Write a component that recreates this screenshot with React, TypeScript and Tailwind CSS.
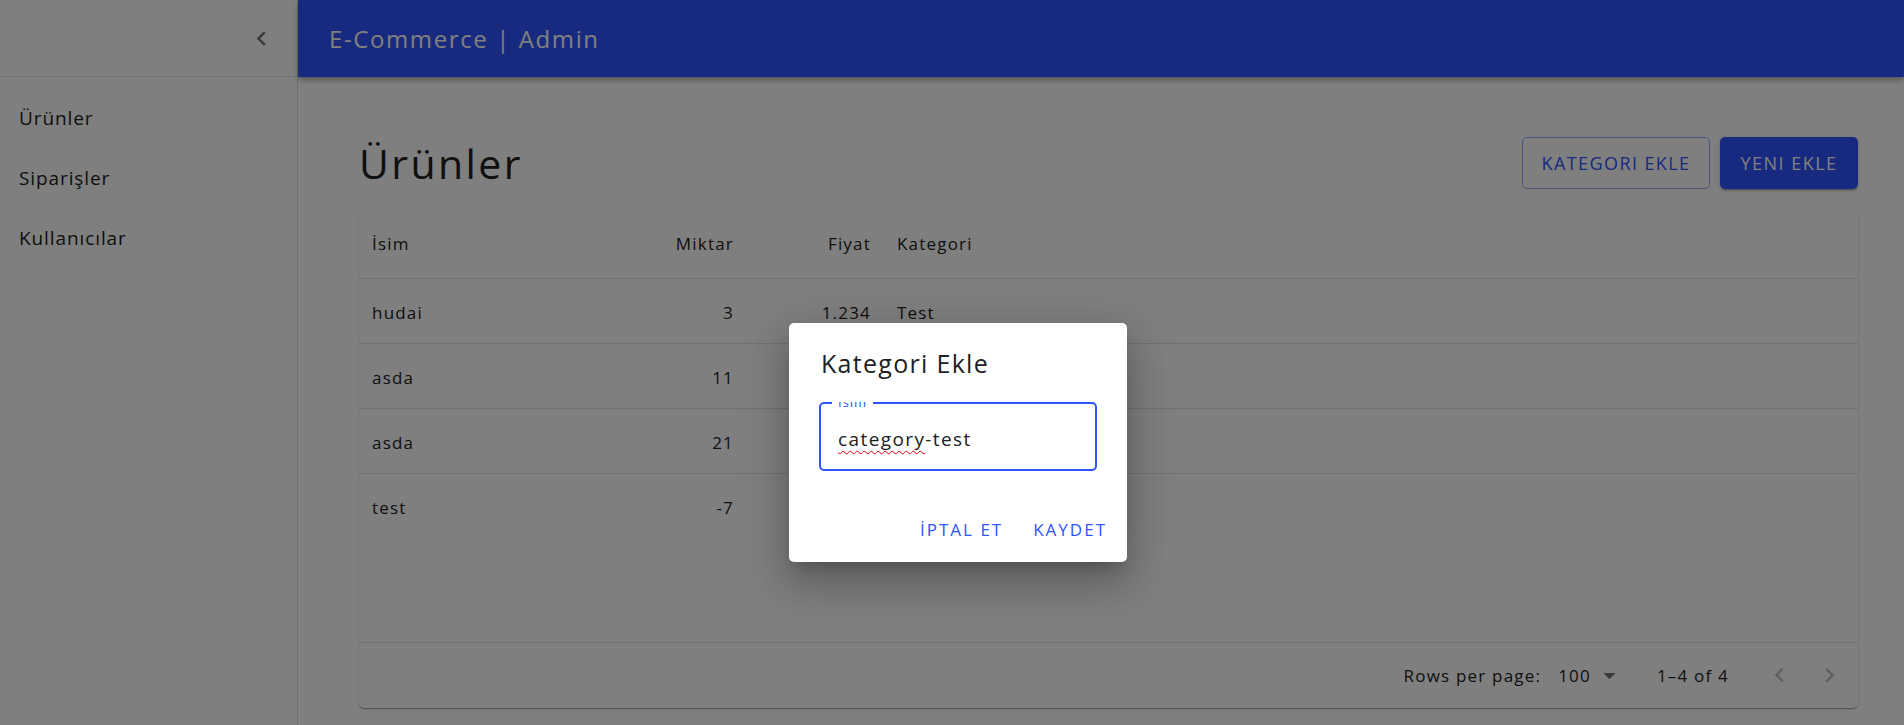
import React from "react";

const FONT = { fontFamily: '"Open Sans", "Noto Sans", sans-serif' };

const ROWS = [
  { name: "hudai", qty: "3", price: "1.234", cat: "Test" },
  { name: "asda", qty: "11", price: "", cat: "" },
  { name: "asda", qty: "21", price: "", cat: "" },
  { name: "test", qty: "-7", price: "", cat: "" },
];

function Icon({ d, className }: { d: string; className?: string }) {
  return (
    <svg viewBox="0 0 24 24" className={className} fill="currentColor">
      <path d={d} />
    </svg>
  );
}

function Sidebar() {
  return (
    <aside className="flex w-[298px] shrink-0 flex-col border-r border-[#e0e0e0] bg-white">
      <div className="flex h-[77px] items-center justify-end border-b border-[#e0e0e0] pr-[21px]">
        <Icon d="M15.41 7.41 14 6l-6 6 6 6 1.41-1.41L10.83 12z" className="h-[29px] w-[29px] text-black/55" />
      </div>
      <nav className="flex flex-col pt-[11px]">
        {["Ürünler", "Siparişler", "Kullanıcılar"].map((t) => (
          <div key={t} className="flex h-[60px] items-center px-[19px] text-[19px] tracking-[0.9px] text-[#212121]">
            {t}
          </div>
        ))}
      </nav>
    </aside>
  );
}

function ProductsTable() {
  return (
    <div className="flex h-[498px] flex-col rounded-[5px] bg-white text-[17px] tracking-[1.2px] text-[#212121] shadow-[0_2px_1px_-1px_rgba(0,0,0,0.2),0_1px_1px_0_rgba(0,0,0,0.14),0_1px_3px_0_rgba(0,0,0,0.12)]">
      <div className="grid h-[69px] grid-cols-[268px_120px_137px_1fr] items-center border-b border-[#e0e0e0] font-medium">
        <div className="px-[13px]">İsim</div>
        <div className="px-[13px] text-right">Miktar</div>
        <div className="px-[13px] text-right">Fiyat</div>
        <div className="px-[13px]">Kategori</div>
      </div>
      {ROWS.map((r, i) => (
        <div
          key={i}
          className={
            i < ROWS.length - 1
              ? "grid h-[65px] grid-cols-[268px_120px_137px_1fr] items-center border-b border-[#e0e0e0] pt-[3px]"
              : "grid h-[65px] grid-cols-[268px_120px_137px_1fr] items-center pt-[3px]"
          }
        >
          <div className="px-[13px]">{r.name}</div>
          <div className="px-[13px] text-right">{r.qty}</div>
          <div className="px-[13px] text-right">{r.price}</div>
          <div className="px-[13px]">{r.cat}</div>
        </div>
      ))}
      <div className="flex-1" />
      <div className="flex h-[66px] items-center justify-end border-t border-[#e0e0e0] pr-[14px]">
        <span>Rows per page:</span>
        <span className="ml-[17px]">100</span>
        <Icon d="M7 10l5 5 5-5z" className="ml-[4px] h-[29px] w-[29px] text-black/55" />
        <span className="ml-[33px]">1–4 of 4</span>
        <div className="ml-[36px] flex items-center gap-[21px] text-black/25">
          <Icon d="M15.41 16.09l-4.58-4.59 4.58-4.59L14 5.5l-6 6 6 6z" className="h-[29px] w-[29px]" />
          <Icon d="M8.59 16.34l4.58-4.59-4.58-4.59L10 5.75l6 6-6 6z" className="h-[29px] w-[29px]" />
        </div>
      </div>
    </div>
  );
}

function CategoryDialog() {
  return (
    <div className="absolute left-[789px] top-[323px] flex h-[239px] w-[338px] flex-col rounded-[5px] bg-white shadow-[0_11px_15px_-7px_rgba(0,0,0,0.2),0_24px_38px_3px_rgba(0,0,0,0.14),0_9px_46px_8px_rgba(0,0,0,0.12)]">
      <div className="px-[32px] pt-[21px] text-[25px] leading-[38px] tracking-[1.3px] text-[#212121]">Kategori Ekle</div>
      <div className="mt-[20px] overflow-hidden px-[30px]">
        <div className="relative flex h-[69px] items-center rounded-[5px] border-2 border-[#3054ff] px-[17px] pt-[6px]">
          <span className="absolute left-[11px] top-[-10px] bg-white px-[6px] text-[13px] leading-[16px] tracking-[1px] text-[#3054ff]">
            İsim
          </span>
          <span className="text-[19px] tracking-[1.4px] text-[#212121]">
            <span className="underline decoration-red-600 decoration-wavy decoration-1 underline-offset-[4px]">category</span>
            -test
          </span>
        </div>
      </div>
      <div className="mt-auto flex items-center justify-end gap-[30px] pb-[20px] pr-[20px] text-[17px] font-medium uppercase tracking-[2px] text-[#3054ff]">
        <span>İPTAL ET</span>
        <span>KAYDET</span>
      </div>
    </div>
  );
}

export default function App() {
  return (
    <div className="relative h-[725px] w-full overflow-hidden bg-white" style={FONT}>
      <div className="flex h-full">
        <Sidebar />
        <div className="flex min-w-0 flex-1 flex-col">
          <header className="flex h-[77px] shrink-0 items-center bg-[#3054ff] pl-[31px] text-[24px] tracking-[1.6px] text-white shadow-[0_2px_4px_-1px_rgba(0,0,0,0.2),0_4px_5px_0_rgba(0,0,0,0.14),0_1px_10px_0_rgba(0,0,0,0.12)]">
            E-Commerce | Admin
          </header>
          <main className="pl-[61px] pr-[46px] pt-[60px]">
            <div className="mb-[21px] flex h-[52px] items-center justify-between">
              <h1 className="text-[41px] leading-[52px] tracking-[2.4px] text-[#212121]">Ürünler</h1>
              <div className="flex gap-[10px]">
                <button className="flex h-[52px] w-[188px] items-center justify-center rounded-[5px] border border-[#3054ff]/50 text-[18px] font-medium uppercase tracking-[1.4px] text-[#3054ff]">
                  KATEGORI EKLE
                </button>
                <button className="flex h-[52px] w-[138px] items-center justify-center rounded-[5px] bg-[#3054ff] text-[18px] font-medium uppercase tracking-[1.5px] text-white shadow-[0_3px_1px_-2px_rgba(0,0,0,0.2),0_2px_2px_0_rgba(0,0,0,0.14),0_1px_5px_0_rgba(0,0,0,0.12)]">
                  YENI EKLE
                </button>
              </div>
            </div>
            <ProductsTable />
          </main>
        </div>
      </div>
      <div className="absolute inset-0 bg-black/50" />
      <CategoryDialog />
    </div>
  );
}
